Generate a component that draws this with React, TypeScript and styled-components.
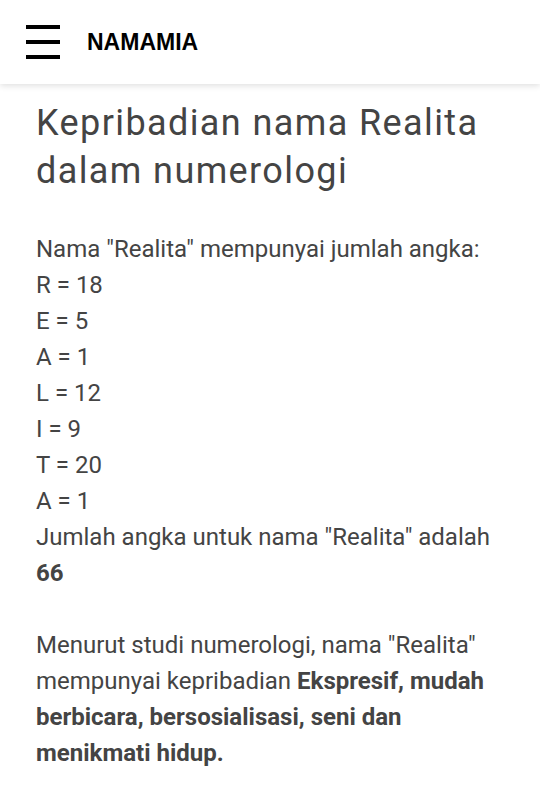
import React from 'react';
import styled, { createGlobalStyle } from 'styled-components';

const GlobalStyle = createGlobalStyle`
    body {
        margin: 0;
        background: #fff;
        font-family: Roboto, "Liberation Sans", sans-serif;
    }
`;

const Header = styled.header`
    height: 84px;
    display: flex;
    align-items: center;
    padding-left: 26px;
    background: #fff;
    box-shadow: 0 2px 6px rgba(0, 0, 0, 0.12);
`;

const Burger = styled.div`
    width: 34px;
    height: 34px;
    display: flex;
    flex-direction: column;
    justify-content: space-between;
    span {
        display: block;
        height: 4px;
        background: #000;
    }
`;

const Brand = styled.div`
    margin-left: 27px;
    font-family: "Liberation Sans", Arial, sans-serif;
    font-weight: bold;
    font-size: 23px;
    color: #000;
`;

const Main = styled.main`
    padding: 15px 36px 0;
    color: #444;
`;

const Title = styled.h1`
    margin: 0 0 36px;
    font-size: 36px;
    font-weight: 400;
    line-height: 48px;
    letter-spacing: 1.4px;
`;

const Para = styled.p`
    margin: 0 0 36px;
    font-size: 24px;
    line-height: 36px;
    &:last-child {
        margin-bottom: 0;
    }
`;

const letters: [string, number][] = [
    ['R', 18], ['E', 5], ['A', 1], ['L', 12], ['I', 9], ['T', 20], ['A', 1],
];

const App: React.FC = () => {
    return (
        <>
            <GlobalStyle />
            <Header>
                <Burger><span /><span /><span /></Burger>
                <Brand>NAMAMIA</Brand>
            </Header>
            <Main>
                <Title>Kepribadian nama Realita dalam numerologi</Title>
                <Para>
                    Nama "Realita" mempunyai jumlah angka:<br />
                    {letters.map(([l, n], i) => (
                        <React.Fragment key={i}>{l} = {n}<br /></React.Fragment>
                    ))}
                    Jumlah angka untuk nama "Realita" adalah <b>66</b>
                </Para>
                <Para>
                    Menurut studi numerologi, nama "Realita" mempunyai kepribadian{' '}
                    <b>Ekspresif, mudah berbicara, bersosialisasi, seni dan menikmati hidup.</b>
                </Para>
            </Main>
        </>
    );
};

export default App;
